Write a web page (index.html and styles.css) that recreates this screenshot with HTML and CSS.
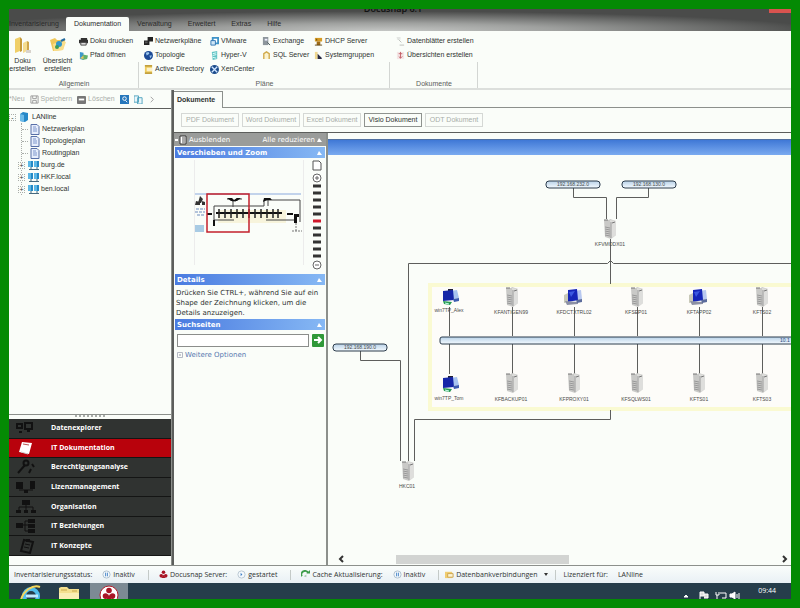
FILE: index.html
```html
<!DOCTYPE html>
<html lang="de">
<head>
  <meta charset="UTF-8">
  <meta name="viewport" content="width=device-width, initial-scale=1.0">
  <title>Docusnap 6.1</title>
  <link rel="stylesheet" href="styles.css">
</head>
<body>
  <!-- Shared icons -->
  <svg class="defs" width="0" height="0" aria-hidden="true">
    <symbol id="i-server" viewBox="0 0 14 20">
      <path d="M1 1h5l1-1 6 2v14l-5 4-6-2z" fill="#c9c9c7"/>
      <path d="M7 1l6 1v14l-5 4z" fill="#dededc"/>
      <path d="M8 3v16M2 8l5 1M2 10l5 1M2 12l5 1M2 14l5 1M2 16l5 1" stroke="#999" fill="none"/>
      <path d="M1 1h4M9 4l3-1" stroke="#777"/>
    </symbol>
    <symbol id="i-pc" viewBox="0 0 18 18">
      <path d="M0 7l4-2v9l-4 1z" fill="#c8c8b8"/>
      <path d="M9 3l8-1 1 9-8 2z" fill="#b8c8f0"/>
      <path d="M4 2l9-1 1 11-10 2z" fill="#1626b8"/>
      <path d="M5 4l6-1-4 6z" fill="#3c58e0"/>
      <path d="M1 13l13 1v2l-11 1z" fill="#8c90a4"/>
      <path d="M12 12l6-1v3l-5 1z" fill="#5c6c9c"/>
    </symbol>
    <symbol id="i-client" viewBox="0 0 18 18">
      <path d="M7 1h5v3H7z" fill="#223"/>
      <path d="M9 3l7-1 2 8-7 1z" fill="#a8c4f0"/>
      <path d="M2 3l10-1 1 10-11 1z" fill="#1626a8"/>
      <path d="M12 11l6-1v3l-5 1z" fill="#3c5cb0"/>
      <path d="M2 13l9 1-2 3-6-1z" fill="#279a52"/>
      <path d="M4 15l4 1" stroke="#cfe" fill="none"/>
    </symbol>
    <symbol id="i-doc" viewBox="0 0 10 11">
      <path d="M1 .5h6l2 2v8H1z" fill="#e6edfb" stroke="#5870a8"/>
      <path d="M3 3h3M3 5h4M3 7h4" stroke="#7f97cc"/>
    </symbol>
    <symbol id="i-domain" viewBox="0 0 12 10">
      <path d="M0 1h5v6H0zM6 1h5v6H6z" fill="#2488c4"/>
      <path d="M0 1h3v6H0zM6 1h3v6H6z" fill="#5cb8e6"/>
      <path d="M3 7v2.500M9 7v2.500M1 9.500h10" stroke="#456a80"/>
    </symbol>
    <symbol id="i-pause" viewBox="0 0 10 10">
      <circle cx="5" cy="5" r="4" fill="#f4f9fd" stroke="#a9bccb"/>
      <path d="M4 3v4M6 3v4" stroke="#3d7fc4"/>
    </symbol>
    <symbol id="i-docusnap" viewBox="0 0 20 20">
      <circle cx="10" cy="5" r="4"/><circle cx="5" cy="13" r="4"/><circle cx="15" cy="13" r="4"/>
      <path d="M10 10l4 8H6z"/>
    </symbol>
  </svg>

  <div class="app">
    <header class="titlebar">
      <div class="caption">
        <h1>Docusnap 6.1</h1>
        <button class="close" aria-label="Schließen"></button>
      </div>
      <nav class="tabs">
        <button class="tab tab-first">Inventarisierung</button>
        <button class="tab active">Dokumentation</button>
        <button class="tab">Verwaltung</button>
        <button class="tab">Erweitert</button>
        <button class="tab">Extras</button>
        <button class="tab">Hilfe</button>
      </nav>
    </header>

    <section class="ribbon">
      <div class="group general">
        <div class="items">
          <button class="big"><svg width="18" height="18" viewBox="0 0 18 18"><path d="M1 3l5-2v14l-5 2z" fill="#f0cf68"/><path d="M6 1l2 2v12l-2 1z" fill="#c69a38"/><path d="M9 7l4-2v10l-4 2z" fill="#f4dc90"/><path d="M13 5l2 1v9l-2 1z" fill="#cfa64c"/><path d="M12 14h5v3h-5z" fill="#d8d3cc"/></svg>Doku<br>erstellen</button>
          <button class="big"><svg width="18" height="18" viewBox="0 0 18 18"><path d="M1 4l5-2 2 2h8l-2 10-10 1z" fill="#f0c85a"/><path d="M4 8l9-3 4 1-3 8-9 1z" fill="#f9de8c"/><circle cx="10" cy="8" r="3" fill="#3196cc"/><circle cx="8" cy="11" r="2" fill="#3c9c58"/><path d="M12 5l4-2" stroke="#256ca0" stroke-width="2"/></svg>Übersicht<br>erstellen</button>
          <div class="list">
            <button><svg class="ic" viewBox="0 0 10 10"><path d="M2 1h7v2H2zM0 3h10v4H0z" fill="#333"/><path d="M2 6h6v3H2z" fill="#ddd" stroke="#444"/></svg>Doku drucken</button>
            <button><svg class="ic" viewBox="0 0 10 10"><path d="M1 1l4 1v8L1 9z" fill="#3d98cc"/><path d="M4 4l6 1-1 4-5 1z" fill="#62b06c"/><path d="M1 8l4-3v4z" fill="#e4c65c"/></svg>Pfad öffnen</button>
          </div>
        </div>
        <h2>Allgemein</h2>
      </div>
      <div class="group plans">
        <div class="items">
          <div class="list">
            <button><svg class="ic" viewBox="0 0 10 10"><path d="M4 0h6v5H4zM0 4h6v5H0z" fill="#222"/><path d="M1 5h3v2H1z" fill="#555"/></svg>Netzwerkpläne</button>
            <button><svg class="ic" viewBox="0 0 10 10"><circle cx="5" cy="5" r="5" fill="#1d4b96"/><path d="M2 2l3-1 1 2-3 2zM6 5l3 0-2 3z" fill="#9cc8ee"/></svg>Topologie</button>
            <button><svg class="ic" viewBox="0 0 10 10"><path d="M1 0h8v10H1z" fill="#eecb5c"/><path d="M1 1h8M1 9h8" stroke="#9c7a26"/><path d="M3 3h6v4H3z" fill="#fbf1c8"/></svg>Active Directory</button>
          </div>
          <div class="list">
            <button><svg class="ic" viewBox="0 0 10 10"><path d="M3 1h6v6H3z" fill="#fff" stroke="#3f93c8" stroke-width="2"/><path d="M1 4h5v5H1z" fill="#cfe6f6" stroke="#2c72b0"/></svg>VMware</button>
            <button><svg class="ic" viewBox="0 0 10 10"><path d="M2 1l6-1v9l-5 1z" fill="#62c4c4"/><path d="M3 3l4-1M3 5l4-1M3 7l4 1" stroke="#e8ffff"/></svg>Hyper-V</button>
            <button><svg class="ic" viewBox="0 0 10 10"><circle cx="5" cy="5" r="5" fill="#1c4c8c"/><path d="M2 2l6 6M8 2L2 8" stroke="#cfe4ff" stroke-width="1.500"/></svg>XenCenter</button>
          </div>
          <div class="list">
            <button><svg class="ic" viewBox="0 0 10 10"><path d="M1 0h6v9H1z" fill="#8d969c"/><path d="M3 2h3v2H3z" fill="#eef"/><path d="M6 6l3 3" stroke="#455"/></svg>Exchange</button>
            <button><svg class="ic" viewBox="0 0 10 10"><path d="M2 9V3l3-2 3 2v6" fill="#fbf3cf" stroke="#d0a94a" stroke-width="1.500"/></svg>SQL Server</button>
          </div>
          <div class="list">
            <button><svg class="ic" viewBox="0 0 10 10"><path d="M1 1h8v4H1z" fill="#d59a24"/><path d="M3 5h4v4H3z" fill="#9c6a18"/><path d="M1 9h8M3 2v2" stroke="#5c4212"/></svg>DHCP Server</button>
            <button><svg class="ic" viewBox="0 0 10 10"><path d="M1 1h3v8H1z" fill="#f0d890"/><path d="M4 3l5 5-1 1H4z" fill="#2a2a44"/></svg>Systemgruppen</button>
          </div>
        </div>
        <h2>Pläne</h2>
      </div>
      <div class="group docs">
        <div class="items">
          <div class="list">
            <button><svg class="ic" viewBox="0 0 10 10"><path d="M1 1l5 5M4 9h5" stroke="#b9bdb9"/><path d="M1 0h4v3H1z" fill="#e3e6e3"/></svg>Datenblätter erstellen</button>
            <button><svg class="ic" viewBox="0 0 10 10"><path d="M1 1h8v8H1z" fill="#f4e6e6"/><path d="M5 1v7M3 3h4M3 6l2 2 2-2" stroke="#c25c64" fill="none"/></svg>Übersichten erstellen</button>
          </div>
        </div>
        <h2>Dokumente</h2>
      </div>
    </section>

    <main class="workspace">
      <aside class="explorer">
        <div class="tree-tools">
          <button disabled>*Neu</button>
          <button disabled><svg class="ic" viewBox="0 0 10 10"><path d="M1 1h8v8H1zM3 1v3h4V1M3 9V6h4v3" fill="none" stroke="#999"/></svg>Speichern</button>
          <button disabled><svg class="ic" viewBox="0 0 10 10"><rect width="10" height="9" rx="1" y="1" fill="#777"/><path d="M2 5h6" stroke="#fff" stroke-width="2"/></svg>Löschen</button>
          <button class="tool" aria-label="Suchen"><svg class="ic" viewBox="0 0 10 10"><path d="M0 0h10v10H0z" fill="#2777bc"/><circle cx="5" cy="4" r="2" fill="none" stroke="#fff"/><path d="M6 6l2 2" stroke="#fff"/></svg></button>
          <button class="tool" aria-label="Kopieren"><svg class="ic" viewBox="0 0 10 10"><path d="M0 1h5v7H0zM4 3h5v7H4z" fill="#eaf6fb" stroke="#4ba0bc"/></svg></button>
          <button class="tool" aria-label="Mehr"><svg class="ic" viewBox="0 0 10 10"><path d="M3 2l3 3-3 3" fill="none" stroke="#999"/></svg></button>
        </div>
        <div class="tree">
          <div class="node root"><span class="expander">-</span><svg width="8" height="10" viewBox="0 0 8 10"><path d="M0 2l3-2 5 1v7l-3 2-5-1z" fill="#2588c8"/><path d="M0 2l4 1v7l-4-1z" fill="#6cbbe8"/></svg>LANline</div>
          <ul>
            <li class="node"><i></i><svg width="10" height="11"><use href="#i-doc"/></svg>Netzwerkplan</li>
            <li class="node"><i></i><svg width="10" height="11"><use href="#i-doc"/></svg>Topologieplan</li>
            <li class="node"><i></i><svg width="10" height="11"><use href="#i-doc"/></svg>Routingplan</li>
            <li class="node domain"><span class="expander">+</span><svg width="12" height="10"><use href="#i-domain"/></svg>burg.de</li>
            <li class="node domain"><span class="expander">+</span><svg width="12" height="10"><use href="#i-domain"/></svg>HKF.local</li>
            <li class="node domain"><span class="expander">+</span><svg width="12" height="10"><use href="#i-domain"/></svg>ben.local</li>
          </ul>
        </div>
        <div class="grip"></div>
        <nav class="modules">
          <button><svg viewBox="0 0 20 16"><path d="M1 4h5v4H1zM9 3h7v6H9zM3 12h3M11 11h3" fill="none" stroke="#111" stroke-width="2"/></svg>Datenexplorer</button>
          <button class="active"><svg viewBox="0 0 20 16"><path d="M6 2l10 1-3 11-10-2z" fill="#fff"/><path d="M7 4l6 1" stroke="#b55" stroke-width="1"/><path d="M5 12l7 2" stroke="#ccc"/></svg>IT Dokumentation</button>
          <button><svg viewBox="0 0 20 16"><path d="M2 14l7-8M13 14l2-4M16 5l2 3" stroke="#111" stroke-width="2"/><circle cx="10" cy="4" r="2.500" fill="none" stroke="#111" stroke-width="2"/></svg>Berechtigungsanalyse</button>
          <button><svg viewBox="0 0 20 16"><path d="M0 3h7v7H0zM14 2h5v8h-5zM8 11h4v3H8z" fill="#111"/><path d="M3 11h14" stroke="#111"/></svg>Lizenzmanagement</button>
          <button><svg viewBox="0 0 20 16"><path d="M6 1h8v5H6zM0 11h5v3H0zM8 11h4v3H8zM15 11h5v3h-5z" fill="#111"/><path d="M10 6v5M3 11V8h14v3" stroke="#111" fill="none"/></svg>Organisation</button>
          <button><svg viewBox="0 0 20 16"><path d="M0 5h7v5H0zM12 1h7v4h-7zM12 6h7v4h-7zM12 11h7v4h-7z" fill="#111"/><path d="M7 7h5M9 7v6h3M9 7V3h3" stroke="#111" fill="none"/></svg>IT Beziehungen</button>
          <button><svg viewBox="0 0 20 16"><path d="M8 2l9 2-3 11-9-2z" fill="none" stroke="#111" stroke-width="2"/><path d="M9 6l5 1M8 9l5 1" stroke="#111"/><path d="M10 1h4v3h-4z" fill="#111"/></svg>IT Konzepte</button>
        </nav>
      </aside>

      <section class="documents">
        <div class="doc-tabs"><button class="doc-tab">Dokumente</button></div>
        <div class="doc-types">
          <button disabled>PDF Dokument</button>
          <button disabled>Word Dokument</button>
          <button disabled>Excel Dokument</button>
          <button>Visio Dokument</button>
          <button disabled>ODT Dokument</button>
        </div>

        <div class="viewer">
          <aside class="panel">
            <div class="panel-bar">
              <button><svg width="12" height="10" viewBox="0 0 12 10"><path d="M0 4h3v2H0z" fill="#fff"/><path d="M5 1h6v8H5z" fill="#fff" stroke="#333"/><path d="M7 3h3M7 5h3M7 7h3" stroke="#555"/></svg>Ausblenden</button>
              <button>Alle reduzieren <svg width="5" height="4"><path d="M0 4l2-4 3 4z" fill="#fff"/></svg></button>
            </div>

            <h3>Verschieben und Zoom <svg width="5" height="4"><path d="M0 4l2-4 3 4z" fill="#fff"/></svg></h3>
            <div class="overview">
              <svg class="thumb" width="110" height="105" viewBox="0 0 110 105">
                <path d="M.5 0v105M109.500 0v105" stroke="#ececec"/>
                <path d="M24 50h68v13H24z" fill="#f7f4dc"/>
                <path d="M1 34h106" stroke="#8aa9dd"/>
                <path d="M6 36l3 3-2 4H4zM2 41l4 1v3H1zM8 41l3 1v3H8z" fill="#333"/>
                <path d="M2 49h9M1 52h10M3 55h8" stroke="#6c8bbd" stroke-dasharray="3 1"/>
                <path d="M1 65h9v7H1z" fill="#a8cbe4"/>
                <path d="M33 39h5v2h4v-2h6M39 41v6M71 39h6M74 40v6M70 40h36v22M70 40v6H20v20M20 60h20M72 60h28" stroke="#444" fill="none"/>
                <path d="M33 38h5l2 2 3-2h4l-4 3h-6zM70 38h6l2 2h-5l-4 2zM13 53h5v2h-5zM93 53h6v2h-6zM19 60h2v6h-2zM100 54h5v3h-2v6h-3z" fill="#111"/>
                <path d="M22 53h66" stroke="#111" stroke-width="2"/>
                <path d="M25 49v9M31 49v9M37 49v9M43 49v9M49 49v9M55 49v9M61 49v9M67 49v9M73 49v9M79 49v9M84 49v9" stroke="#222" stroke-width="1.500"/>
                <path d="M102 63v8M98 71h10" stroke="#777" stroke-dasharray="2 1"/>
                <path d="M13 34h42v38H13z" fill="none" stroke="#c4202c" stroke-width="1.500"/>
              </svg>
              <svg class="zoomer" width="10" height="112" viewBox="0 0 10 112">
                <path d="M1 1h6l2 2v7H1z" fill="#fff" stroke="#555"/>
                <circle cx="5" cy="18" r="4" fill="#fff" stroke="#666"/><path d="M3 18h4M5 16v4" stroke="#666"/>
                <path d="M1 26h8M1 33h8M1 40h8M1 47h8M1 54h8M1 68h8M1 75h8M1 82h8M1 89h8M1 96h8" stroke="#333" stroke-width="3"/>
                <path d="M1 61h8" stroke="#d0182c" stroke-width="3"/>
                <circle cx="5" cy="105" r="4" fill="#fff" stroke="#666"/><path d="M3 105h4" stroke="#666"/>
              </svg>
            </div>

            <h3>Details <svg width="5" height="4"><path d="M0 4l2-4 3 4z" fill="#fff"/></svg></h3>
            <p>Drücken Sie CTRL+, während Sie auf ein Shape der Zeichnung klicken, um die Details anzuzeigen.</p>

            <h3>Suchseiten <svg width="5" height="4"><path d="M0 4l2-4 3 4z" fill="#fff"/></svg></h3>
            <form class="search">
              <input type="text" aria-label="Suchseiten">
              <button type="button" aria-label="Suchen"><svg width="12" height="12" viewBox="0 0 12 12"><path d="M2 6h7M6 3l3 3-3 3" fill="none" stroke="#fff" stroke-width="2"/></svg></button>
            </form>
            <a class="more" href="#"><svg width="6" height="6" viewBox="0 0 6 6"><path d="M.5.5h5v5h-5zM2 3h2M3 2v2" fill="none" stroke="#b5b9c4"/></svg>Weitere Optionen</a>
          </aside>

          <div class="drawing">
            <div class="drawing-bar"></div>
            <svg class="diagram" role="img" aria-label="Netzwerkplan">
              <defs>
                <linearGradient id="net" x1="0" y1="0" x2="0" y2="1">
                  <stop offset="0" stop-color="#b9d2e8"/><stop offset="1" stop-color="#f4faff"/>
                </linearGradient>
              </defs>
              <!-- Segment frame -->
              <rect x="102" y="130" width="1200" height="124" fill="#fdfcf9" stroke="#fafad2" stroke-width="4"/>

              <!-- Links -->
              <g class="wire">
                <path d="M245.500 33v9.500h33V64M320.500 33v9.500h-32V64"/>
                <path d="M282.500 84v45"/>
                <path d="M80.500 306V108.500h199l3-3 3 3h1200"/>
                <path d="M32.500 196v9.500h40V306"/>
                <path d="M86.500 306v-41.500h196V255"/>
                <path d="M121.500 152v29M184.500 152v29M246.500 152v29M309.500 152v29M371.500 152v29M434.500 152v29"/>
                <path d="M121.500 189v30M184.500 189v30M246.500 189v30M309.500 189v30M371.500 189v30M434.500 189v30"/>
              </g>

              <!-- Subnets -->
              <g class="net">
                <rect x="218" y="26" width="54" height="7" rx="3"/><text x="245" y="31">192.168.232.0</text>
                <rect x="294" y="26" width="54" height="7" rx="3"/><text x="321" y="31">192.168.130.0</text>
                <rect x="5" y="189" width="54" height="7" rx="3"/><text x="32" y="194">192.168.190.0</text>
                <rect x="112" y="182" width="1200" height="7" rx="2"/><text class="bus" x="452" y="187">10.1</text>
              </g>

              <!-- Routers -->
              <g class="host">
                <use href="#i-server" x="275" y="64" width="14" height="20"/><text x="282" y="91">KFVMODX01</text>
                <use href="#i-server" x="73" y="306" width="14" height="20"/><text x="79" y="333">HKC01</text>
              </g>

              <!-- Upper row -->
              <g class="host">
                <use href="#i-client" x="113" y="133" width="18" height="18"/><text x="121" y="157">win7TP_Alex</text>
                <use href="#i-server" x="177" y="132" width="14" height="20"/><text x="183" y="159">KFANTIGEN99</text>
                <use href="#i-pc" x="236" y="133" width="18" height="18"/><text x="246" y="159">KFDCTXTRL02</text>
                <use href="#i-server" x="302" y="132" width="14" height="20"/><text x="308" y="159">KFSEP01</text>
                <use href="#i-pc" x="361" y="133" width="18" height="18"/><text x="371" y="159">KFTAPP02</text>
                <use href="#i-server" x="427" y="132" width="14" height="20"/><text x="434" y="159">KFTS02</text>
              </g>

              <!-- Lower row -->
              <g class="host">
                <use href="#i-client" x="113" y="220" width="18" height="18"/><text x="121" y="245">win7TP_Tom</text>
                <use href="#i-server" x="177" y="218" width="14" height="20"/><text x="183" y="246">KFBACKUP01</text>
                <use href="#i-server" x="239" y="218" width="14" height="20"/><text x="246" y="246">KFPROXY01</text>
                <use href="#i-server" x="302" y="218" width="14" height="20"/><text x="308" y="246">KFSQLWS01</text>
                <use href="#i-server" x="364" y="218" width="14" height="20"/><text x="371" y="246">KFTS01</text>
                <use href="#i-server" x="427" y="218" width="14" height="20"/><text x="434" y="246">KFTS03</text>
              </g>
            </svg>
            <div class="scrollbar">
              <button aria-label="Nach links"><svg width="6" height="8"><path d="M5 1L2 4l3 3" fill="none" stroke="#333" stroke-width="2"/></svg></button>
              <div class="track"><div class="thumb-bar"></div></div>
              <button aria-label="Nach rechts"><svg width="6" height="8"><path d="M1 1l3 3-3 3" fill="none" stroke="#333" stroke-width="2"/></svg></button>
            </div>
          </div>
        </div>
      </section>
    </main>

    <footer class="status">
      <div class="cell"><span>Inventarisierungsstatus:</span><span class="state"><svg class="ic"><use href="#i-pause"/></svg>Inaktiv</span></div>
      <div class="cell"><span><svg class="ic red"><use href="#i-docusnap"/></svg>Docusnap Server:</span><span class="state"><svg class="ic" viewBox="0 0 10 10"><circle cx="5" cy="5" r="4" fill="#f4f9fd" stroke="#b5c4cf"/><path d="M4 3l2 2-2 2z" fill="#3d7fc4"/></svg>gestartet</span></div>
      <div class="cell"><span><svg class="ic" viewBox="0 0 10 10"><path d="M1 7a4 4 0 0 1 7-4" fill="none" stroke="#3c9c4a" stroke-width="2"/><path d="M6 4h4V0z" fill="#3c9c4a"/><path d="M3 7l3-2v3z" fill="#a5cdb0"/></svg>Cache Aktualisierung:</span><span class="state"><svg class="ic"><use href="#i-pause"/></svg>Inaktiv</span></div>
      <div class="cell tight"><button><svg class="ic" viewBox="0 0 10 10"><path d="M0 2h8v7H0z" fill="#f0cd70"/><path d="M3 4h6v4H3z" fill="#fdf3cf" stroke="#caa24c"/></svg>Datenbankverbindungen <svg class="caret" width="4" height="3"><path d="M0 0h4L2 3z"/></svg></button></div>
      <div class="cell tight"><span>Lizenziert für:</span><span>LANline</span></div>
    </footer>

    <div class="taskbar">
      <button class="task" aria-label="Internet Explorer"><svg width="22" height="20" viewBox="0 0 22 20"><circle cx="11" cy="11" r="7" fill="none" stroke="#4fbdec" stroke-width="4"/><path d="M6 11h12" stroke="#bfeaff" stroke-width="3"/><path d="M1 15C3 6 13-1 20 2" fill="none" stroke="#f3d65c" stroke-width="2"/></svg></button>
      <button class="task" aria-label="Explorer"><svg width="22" height="20" viewBox="0 0 22 20"><path d="M1 3l2-1h6l2 2h10v16H1z" fill="#f4e08e"/><path d="M3 5h6M14 6h5" stroke="#c9a94a"/><path d="M1 8h20v12H1z" fill="#faeeb4"/></svg></button>
      <button class="task active" aria-label="Docusnap"><svg width="20" height="20" viewBox="0 0 20 20"><circle cx="10" cy="10" r="9" fill="#fff" stroke="#b3202f" stroke-width="1"/><use href="#i-docusnap" x="3" y="2" width="14" height="14" fill="#a81425"/></svg></button>
      <div class="tray">
        <svg width="60" height="8" viewBox="0 0 60 8" fill="none" stroke="#fff"><path d="M0 6l2-2 2 2z" fill="#fff"/><path d="M16 8V1h4v4h-4M20 3h4v4h-4" fill="#ddd"/><path d="M32 1v3h3V1M33 4v4M36 2h6v5h-4"/><path d="M46 3h2l3-2v7l-3-2h-2z" fill="#fff"/><path d="M53 3v4M55 2v6"/></svg>
        <time>09:44</time>
      </div>
    </div>
  </div>
</body>
</html>
```
FILE: styles.css
```css
:root {
  --frame: #048a04;
  --surface: #fafdf9;
  --line: #8c908c;
  --dark-line: #5c5e5c;
  --text: #2f3331;
  --muted: #a9ada9;
  --nav: #303331;
  --nav-active: #b8020c;
  --head-from: #4a7be0;
  --head-to: #86b8f4;
}

* {
  box-sizing: border-box;
  margin: 0;
  padding: 0;
}

body {
  height: 100vh;
  padding: 9px;
  overflow: hidden;
  background: var(--frame);
  color: var(--text);
  font-family: "Open Sans", "Noto Sans", sans-serif;
  font-size: 7px;
  line-height: 10px;
}

button {
  border: none;
  background: none;
  color: inherit;
  font: inherit;
  white-space: nowrap;
}

svg {
  flex: none;
}

.defs {
  position: absolute;
}

.ic {
  width: 9px;
  height: 9px;
}

.app {
  display: flex;
  flex-direction: column;
  height: 100%;
  overflow: hidden;
  background: var(--surface);
}

/* Title bar */
.titlebar {
  flex: none;
  background:
    radial-gradient(ellipse 56% 90% at 48% 100%, #c4c6c4 0%, rgba(180, 182, 180, 0.8) 40%, rgba(74, 75, 74, 0) 100%),
    #4a4b4a;
}

.caption {
  display: grid;
  grid-template-columns: 1fr auto 1fr;
  height: 8px;
  overflow: hidden;
}

.caption h1 {
  grid-column: 2;
  margin-top: -5px;
  margin-right: 14px;
  color: #111;
  font-size: 9px;
  font-weight: 600;
  line-height: 10px;
}

.close {
  grid-column: 3;
  justify-self: end;
  width: 22px;
  height: 4px;
  background: #d9534f;
}

.tabs {
  display: flex;
  height: 14px;
  font-family: "Liberation Sans", Arial, sans-serif;
}

.tab {
  padding: 0 8px;
  color: #2b2b2b;
}

.tab-first {
  width: 57px;
  padding: 0;
  text-align: left;
}

.tab.active {
  border-radius: 2px 2px 0 0;
  background: var(--surface);
}

/* Ribbon */
.ribbon {
  display: flex;
  flex: none;
  height: 59px;
  border-bottom: 2px solid #dcdfdc;
  font-family: "Liberation Sans", Arial, sans-serif;
}

.group {
  display: flex;
  flex-direction: column;
  justify-content: space-between;
  padding-top: 3px;
  background: linear-gradient(#d3d6d3, #d3d6d3) right bottom / 1px 26px no-repeat;
}

.group h2 {
  height: 9px;
  color: #5a605c;
  font-size: 7px;
  font-weight: 400;
  line-height: 10px;
  text-align: center;
}

.general {
  width: 130px;
}

.plans {
  width: 251px;
}

.docs {
  width: 88px;
}

.items {
  display: flex;
}

.plans .items {
  display: grid;
  grid-template-columns: 66px 52px 52px 1fr;
  padding-left: 5px;
}

.docs .items {
  padding-left: 6px;
}

.big {
  display: flex;
  flex-direction: column;
  align-items: center;
  width: 27px;
  padding-top: 2px;
  line-height: 8px;
}

.big svg {
  margin-bottom: 3px;
}

.big + .big {
  width: 43px;
}

.list button {
  display: flex;
  align-items: center;
  gap: 2px;
  height: 14px;
}

/* Workspace */
.workspace {
  display: grid;
  flex: 1;
  grid-template-columns: 163px 1fr;
  min-height: 0;
  border-bottom: 1px solid var(--line);
}

.explorer {
  display: flex;
  flex-direction: column;
  min-height: 0;
  padding-bottom: 9px;
  border-right: 1px solid var(--line);
  font-family: "Liberation Sans", Arial, sans-serif;
}

.tree-tools {
  display: flex;
  align-items: center;
  gap: 5px;
  height: 19px;
  border-bottom: 1px solid var(--dark-line);
}

.tree-tools button {
  display: flex;
  align-items: center;
  gap: 2px;
}

.tree-tools button:disabled {
  color: var(--muted);
}

.tree {
  flex: 1;
  padding-top: 2px;
  border-bottom: 1px solid var(--line);
}

.tree ul {
  margin-left: 12px;
  border-left: 1px dotted var(--muted);
  list-style: none;
}

.node {
  display: flex;
  align-items: center;
  gap: 2px;
  height: 12px;
}

.node i {
  width: 6px;
  border-top: 1px dotted var(--muted);
}

.root {
  gap: 4px;
}

.expander {
  width: 7px;
  height: 7px;
  border: 1px dotted var(--muted);
  background: var(--surface);
  line-height: 5px;
  text-align: center;
}

.domain {
  gap: 1px;
}

.domain .expander {
  margin-left: -4px;
  margin-right: 2px;
}

.grip {
  height: 4px;
  margin: 0 66px;
  border-top: 2px dotted var(--muted);
}

.modules {
  display: flex;
  flex-direction: column;
  height: 137px;
  background: var(--nav);
  font-family: "Open Sans", sans-serif;
}

.modules button {
  display: flex;
  flex: 1;
  align-items: center;
  gap: 15px;
  padding-left: 7px;
  border-bottom: 1px solid #141514;
  color: #fff;
  font-weight: 700;
}

.modules .active {
  background: var(--nav-active);
}

.modules svg {
  width: 20px;
  height: 16px;
}

/* Documents */
.documents {
  display: flex;
  flex-direction: column;
  min-width: 0;
  min-height: 0;
  border-left: 2px solid var(--dark-line);
}

.doc-tabs {
  flex: none;
  height: 18px;
  padding-top: 1px;
  border-bottom: 1px solid var(--line);
}

.doc-tab {
  height: 17px;
  padding: 0 7px 0 3px;
  border: 1px solid var(--line);
  border-width: 1px 1px 0 0;
  background: var(--surface);
  font-family: "Liberation Sans", Arial, sans-serif;
  font-weight: 700;
}

.doc-types {
  display: flex;
  flex: none;
  gap: 3px;
  height: 25px;
  padding: 5px 7px;
  border-bottom: 1px solid var(--dark-line);
  font-family: "Liberation Sans", Arial, sans-serif;
}

.doc-types button {
  width: 58px;
  border: 1px solid #8f938f;
}

.doc-types button:disabled {
  border-color: #d5d8d5;
  color: var(--muted);
}

.viewer {
  display: grid;
  flex: 1;
  grid-template-columns: 154px 1fr;
  min-height: 0;
}

/* Side panel */
.panel {
  border-right: 2px solid var(--line);
  font-family: "DejaVu Sans", Verdana, sans-serif;
}

.panel-bar {
  display: flex;
  justify-content: space-between;
  height: 13px;
  padding: 0 4px 0 1px;
  background: #9a9c9a;
  color: #fff;
}

.panel-bar button {
  display: flex;
  align-items: center;
  gap: 2px;
}

.panel h3 {
  display: flex;
  align-items: center;
  justify-content: space-between;
  height: 11px;
  margin: 1px 1px 0;
  padding: 0 3px 0 2px;
  background: linear-gradient(90deg, var(--head-from), var(--head-to));
  color: #fff;
  font-size: 7px;
}

.overview {
  display: flex;
  justify-content: space-between;
  height: 115px;
  padding: 2px 4px 0 20px;
}

.panel p {
  height: 30px;
  margin: 3px 0 0;
  padding-left: 2px;
}

.search {
  display: flex;
  gap: 3px;
  height: 13px;
  margin: 4px 2px 0 3px;
}

.search input {
  flex: 1;
  min-width: 0;
  border: 1px solid #8b8d8b;
  background: #fff;
  font: inherit;
}

.search button {
  width: 12px;
  border-radius: 1px;
  background: #2f9838;
}

.more {
  display: flex;
  align-items: center;
  gap: 2px;
  margin: 3px 3px 0;
  color: #5878b0;
  text-decoration: none;
}

/* Drawing */
.drawing {
  display: flex;
  flex-direction: column;
  min-width: 0;
  min-height: 0;
  padding-top: 6px;
}

.drawing-bar {
  flex: none;
  height: 16px;
  border-top: 1px solid #5070a0;
  background: linear-gradient(#3f78d6, #7aaaf0);
}

.diagram {
  flex: 1;
  width: 100%;
  min-height: 0;
}

.wire {
  fill: none;
  stroke: #5d5e5c;
}

.host text,
.net text {
  fill: #4a4a48;
  font-family: "Liberation Sans", Arial, sans-serif;
  font-size: 5px;
  text-anchor: middle;
}

.net rect {
  fill: url(#net);
  stroke: #2c3c4c;
}

.net .bus {
  fill: #2c4a80;
  text-anchor: start;
}

.scrollbar {
  display: flex;
  align-items: center;
  justify-content: space-between;
  height: 12px;
  padding: 0 3px 0 10px;
}

.scrollbar button {
  display: flex;
}

.track {
  flex: 1;
  padding: 0 10px 0 52px;
}

.thumb-bar {
  width: 46%;
  height: 9px;
  background: #d2d4d2;
}

/* Status bar */
.status {
  display: flex;
  flex: none;
  align-items: center;
  height: 17px;
  background: linear-gradient(#fafdfb, #e9f0f5);
}

.cell {
  display: flex;
  gap: 10px;
  padding: 0 13px 0 10px;
  border-right: 1px solid #c4cac8;
}

.cell:first-child {
  padding-left: 5px;
}

.cell:last-child {
  border-right: none;
}

.tight {
  padding: 0 6px;
}

.tight:last-child {
  padding-left: 8px;
}

.cell span,
.cell button {
  display: flex;
  align-items: center;
  gap: 2px;
}

.caret {
  margin: 0 1px 0 4px;
  fill: #333;
}

.red {
  fill: #a81425;
}

/* Taskbar */
.taskbar {
  display: flex;
  flex: none;
  height: 16px;
  overflow: hidden;
  background: #263d4b;
}

.task {
  display: flex;
  justify-content: center;
  width: 38px;
  height: 24px;
  padding-top: 2px;
}

.task:first-child {
  margin-left: 3px;
}

.task.active {
  margin-left: 2px;
  background: #7c8a94;
}

.tray {
  display: flex;
  flex: 1;
  align-items: flex-end;
  justify-content: flex-end;
  gap: 14px;
  padding-right: 15px;
  color: #fff;
}

.tray time {
  align-self: flex-start;
  padding-top: 3px;
}
```
